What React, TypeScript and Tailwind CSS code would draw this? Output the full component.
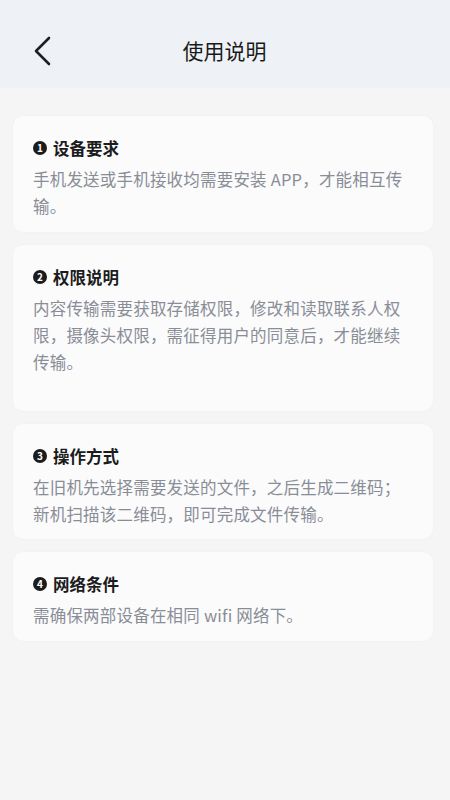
import { ReactNode } from "react";

type Item = {
  num: number;
  title: string;
  lines: string[];
  pb: string;
};

const items: Item[] = [
  {
    num: 1,
    title: "设备要求",
    lines: ["手机发送或手机接收均需要安装 APP，才能相互传", "输。"],
    pb: "pb-[12px]",
  },
  {
    num: 2,
    title: "权限说明",
    lines: [
      "内容传输需要获取存储权限，修改和读取联系人权",
      "限，摄像头权限，需征得用户的同意后，才能继续",
      "传输。",
    ],
    pb: "pb-[35px]",
  },
  {
    num: 3,
    title: "操作方式",
    lines: [
      "在旧机先选择需要发送的文件，之后生成二维码；",
      "新机扫描该二维码，即可完成文件传输。",
    ],
    pb: "pb-[11px]",
  },
  {
    num: 4,
    title: "网络条件",
    lines: ["需确保两部设备在相同 wifi 网络下。"],
    pb: "pb-[12px]",
  },
];

function BackIcon() {
  return (
    <svg width="24" height="32" viewBox="0 0 24 32" fill="none">
      <path
        d="M16 3 L3 16 L16 29"
        stroke="#1f1f1f"
        strokeWidth="2.6"
        strokeLinecap="round"
        strokeLinejoin="round"
      />
    </svg>
  );
}

function NumBadge({ n }: { n: number }) {
  return (
    <span className="flex h-[14px] w-[14px] shrink-0 items-center justify-center rounded-full bg-[#1c1c1c] text-[10px] font-bold leading-none text-white">
      {n}
    </span>
  );
}

function Card({ item }: { item: Item }): ReactNode {
  return (
    <div
      className={`rounded-[10px] bg-[#fbfbfc] pl-[20px] pt-[19px] shadow-[0_0_3px_rgba(0,0,0,0.03)] ${item.pb}`}
    >
      <div className="flex h-[26px] items-center gap-[6px]">
        <NumBadge n={item.num} />
        <span className="text-[16.5px] font-bold text-[#1c1c1c]">
          {item.title}
        </span>
      </div>
      <div className="mt-[5px] text-[16.5px] leading-[27px] tracking-[0.2px] text-[#898d96]">
        {item.lines.map((l, i) => (
          <div key={i} className="whitespace-nowrap">
            {l}
          </div>
        ))}
      </div>
    </div>
  );
}

export default function App() {
  return (
    <div
      className="min-h-screen w-[450px] bg-[#f5f5f6]"
      style={{ fontFamily: '"Noto Sans CJK SC", "Noto Sans", sans-serif' }}
    >
      <div className="flex h-[88px] items-center bg-[#eef2f7] pl-[33px] pr-[58px] pt-[14px]">
        <BackIcon />
        <div className="flex-1 text-center text-[21px] text-[#1a1a1a]">
          使用说明
        </div>
      </div>
      <div className="flex flex-col gap-[13px] pl-[13px] pr-[17px] pt-[28px]">
        {items.map((it) => (
          <Card key={it.num} item={it} />
        ))}
      </div>
    </div>
  );
}
